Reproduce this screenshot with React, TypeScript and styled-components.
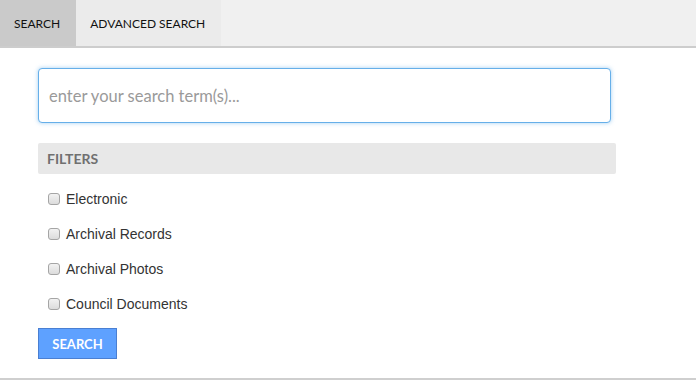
import styled, { createGlobalStyle } from "styled-components";

const GlobalStyle = createGlobalStyle`
  html, body {
    margin: 0;
    padding: 0;
    background: #fff;
  }
  body {
    font-family: Lato, "Open Sans", sans-serif;
  }
`;

const Page = styled.div`
  width: 696px;
  height: 380px;
  display: flex;
  flex-direction: column;
  border-bottom: 2px solid #cfcfcf;
  box-sizing: border-box;
`;

const TabBar = styled.nav`
  display: flex;
  height: 48px;
  background-color: #f0f0f0;
  border-bottom: 2px solid #cdcdcd;
  box-sizing: border-box;
`;

const Tab = styled.a<{ $active?: boolean }>`
  display: flex;
  align-items: center;
  padding-inline: 14px 16px;
  font-size: 12px;
  color: #111;
  text-decoration: none;
  background-color: ${(props) => (props.$active ? "#cacaca" : "#ebebeb")};
  cursor: pointer;
`;

const Body = styled.form`
  display: flex;
  flex-direction: column;
  padding: 20px 0 0 38px;
`;

const SearchInput = styled.input`
  width: 573px;
  height: 55px;
  box-sizing: border-box;
  padding: 0 10px;
  font-family: Lato, "Open Sans", sans-serif;
  font-size: 16.5px;
  color: #333;
  border: 1px solid #66afe9;
  border-radius: 4px;
  outline: none;
  box-shadow: 0 0 4px rgba(102, 175, 233, 0.6);

  &::placeholder {
    color: #9a9a9a;
  }
`;

const FiltersHeader = styled.div`
  width: 578px;
  height: 31px;
  margin-top: 20px;
  box-sizing: border-box;
  display: flex;
  align-items: center;
  padding-left: 9px;
  background-color: #e8e8e8;
  border-radius: 2px;
  font-size: 14px;
  font-weight: 700;
  color: #707070;
`;

const FilterList = styled.div`
  display: flex;
  flex-direction: column;
  gap: 15px;
  padding: 15px 0 0 10px;
`;

const FilterRow = styled.label`
  display: flex;
  align-items: center;
  gap: 6px;
  height: 20px;
  font-family: "Liberation Sans", Arial, sans-serif;
  font-size: 14px;
  color: #333;
`;

const Checkbox = styled.input`
  appearance: none;
  margin: 0;
  width: 12px;
  height: 12px;
  border: 1px solid #a5a5a5;
  border-radius: 3px;
  background: linear-gradient(#f2f2f2, #dcdcdc);
  box-sizing: border-box;
`;

const SubmitButton = styled.button`
  align-self: flex-start;
  margin-top: 14px;
  width: 79px;
  height: 31px;
  padding: 0;
  background-color: #5ea1ff;
  border: 1px solid #4a7fd2;
  color: #fff;
  font-family: Lato, "Open Sans", sans-serif;
  font-size: 13px;
  font-weight: 700;
  cursor: pointer;
`;

const filters = ["Electronic", "Archival Records", "Archival Photos", "Council Documents"];

const App = () => {
  return (
    <>
      <GlobalStyle />
      <Page>
        <TabBar>
          <Tab $active>SEARCH</Tab>
          <Tab>ADVANCED SEARCH</Tab>
        </TabBar>
        <Body onSubmit={(e) => e.preventDefault()}>
          <SearchInput placeholder="enter your search term(s)..." autoFocus />
          <FiltersHeader>FILTERS</FiltersHeader>
          <FilterList>
            {filters.map((name) => (
              <FilterRow key={name}>
                <Checkbox type="checkbox" />
                {name}
              </FilterRow>
            ))}
          </FilterList>
          <SubmitButton type="submit">SEARCH</SubmitButton>
        </Body>
      </Page>
    </>
  );
};

export default App;
